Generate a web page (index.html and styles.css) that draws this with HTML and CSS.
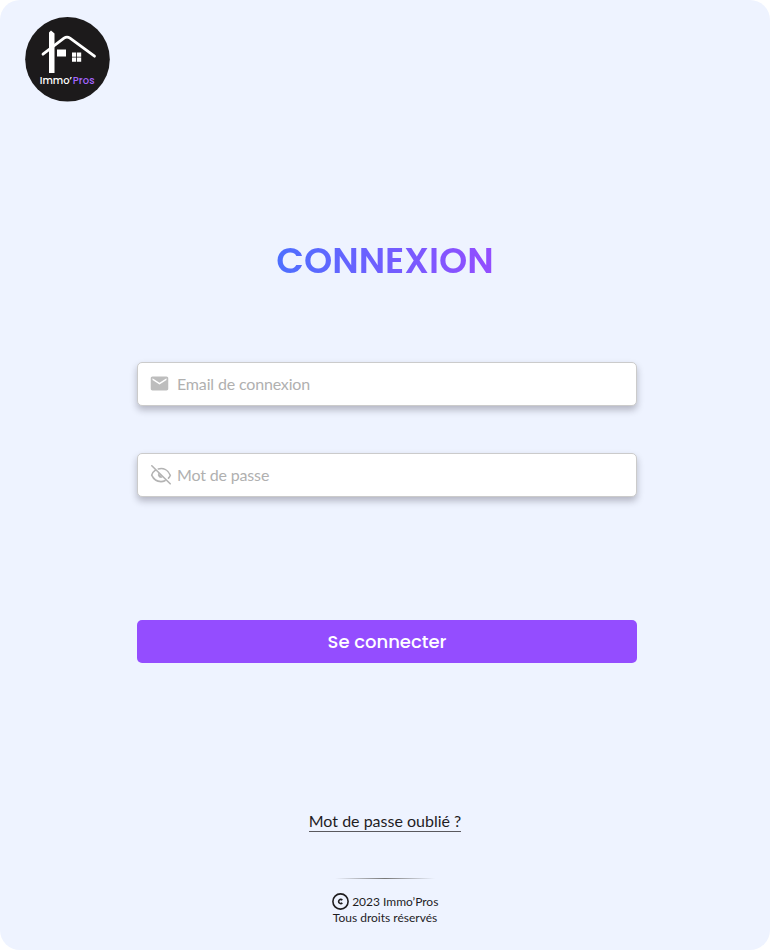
FILE: index.html
```html
<!DOCTYPE html>
<html lang="fr">
<head>
<meta charset="utf-8">
<title>Immo’Pros – Connexion</title>
<link rel="stylesheet" href="styles.css">
</head>
<body>
<div class="page">
  <header class="header">
    <svg class="logo" viewBox="0 0 85 85" role="img" aria-label="Immo’Pros">
      <circle cx="42.5" cy="42.3" r="42.3" fill="#1c1a1b"/>
      <path d="M24 56V15.500L26 13.500L29.500 16.500V56Z" fill="#fff"/>
      <path d="M18 37.200L39 21.200Q42 19.200 45 21.200L69.500 39.200" fill="none" stroke="#fff" stroke-width="2.800" stroke-linecap="round"/>
      <path d="M32 32.500h9v7h-9zM47 35.500h4.200v4.200h-4.200zM52 35.500h4.200v4.200h-4.200zM47 40.500h4.200v4.200h-4.200zM52 40.500h4.200v4.200h-4.200z" fill="#fff"/>
      <text class="logo-text" x="14.800" y="66.600" textLength="32.200" fill="#fff">Immo’</text>
      <text class="logo-text" x="47.800" y="66.600" textLength="21.800" fill="#a566ff">Pros</text>
    </svg>
  </header>
  <main class="login">
    <h1 class="title">CONNEXION</h1>
    <form class="form">
      <label class="field">
        <svg class="icon icon-mail" viewBox="0 0 24 24"><path d="M20 4H4c-1.100 0-2 .9-2 2v12c0 1.100.9 2 2 2h16c1.100 0 2-.9 2-2V6c0-1.100-.9-2-2-2zm0 4-8 5-8-5V6l8 5 8-5z" fill="#bdbdbd"/></svg>
        <input class="input" type="email" placeholder="Email de connexion">
      </label>
      <label class="field">
        <svg class="icon icon-eye" viewBox="0 0 22 22" fill="none" stroke="#b3b3b3" stroke-width="1.600" stroke-linecap="round">
          <path d="M1.800 1.800L20.200 19.800M5.400 6.200C3.400 7.600 2 9.500 1.700 11.200C3.600 15.400 7 17.600 11 17.600C12.400 17.600 13.700 17.300 14.900 16.700M8.300 4.900C13.600 3.400 18.200 6.200 20.300 11.200C19.900 12.300 19.300 13.300 18.500 14.100"/>
          <path d="M8.600 9.500C7.400 12.100 9.700 14.500 12.200 13.200Z" fill="#b3b3b3" stroke-width=".8"/>
        </svg>
        <input class="input" type="password" placeholder="Mot de passe">
      </label>
      <button class="submit" type="button">Se connecter</button>
    </form>
    <a class="forgot">Mot de passe oublié ?</a>
  </main>
  <footer class="footer">
    <div class="divider"></div>
    <div class="copyright">
      <svg class="copy-icon" viewBox="0 0 17 17" fill="none" stroke="#1f1d1f"><circle cx="8.500" cy="8.500" r="7.600" stroke-width="1.600"/><path d="M10.300 7.100A2.100 2.100 0 1 0 10.300 9.900" stroke-width="1.600"/></svg>
      <span>2023 Immo’Pros</span>
    </div>
    <div class="rights">Tous droits réservés</div>
  </footer>
</div>
</body>
</html>
```
FILE: styles.css
```css
* { box-sizing: border-box; }
body { margin: 0; background: #fff; color: #1f1d1f; font-family: Lato, sans-serif; }
.page { width: 770px; height: 950px; background: #eef3ff; border-radius: 20px; display: flex; flex-direction: column; overflow: hidden; }
.header { height: 102px; padding: 16.5px 0 0 25px; }
.logo { display: block; width: 85px; height: 85px; }
.logo-text { font: 500 10px Poppins, Inter, sans-serif; }
.login { display: flex; flex-direction: column; align-items: center; }
.title { margin: 132px 0 0; font: 600 36px/54px Poppins, Inter, sans-serif; color: transparent; background: linear-gradient(90deg, #4d6fff, #944dff); background-clip: text; -webkit-background-clip: text; }
.form { width: 500px; margin: 74px 0 0 4px; display: flex; flex-direction: column; }
.field { height: 44px; margin-bottom: 47px; display: flex; align-items: center; background: #fff; border: 1px solid #cbcbcb; border-radius: 5px; box-shadow: 0 4px 7px rgba(28, 26, 40, .28); }
.icon { flex: none; }
.icon-mail { width: 21px; height: 21px; margin: 0 7.500px 1px 10.500px; }
.icon-eye { width: 22px; height: 22px; margin: 0 5px 0 12px; }
.input { flex: 1; min-width: 0; border: 0; padding: 0; background: transparent; outline: 0; font: 400 16px/24px Lato, sans-serif; letter-spacing: -0.16px; }
.input::placeholder { color: #b0b0b0; opacity: 1; }
.submit { margin-top: 76px; height: 43px; border: 0; border-radius: 5px; background: #944dff; color: #fff; font: 500 18px/27px Poppins, Inter, sans-serif; }
.forgot { margin-top: 148px; height: 21px; line-height: 20px; font-size: 16px; border-bottom: 1px solid #5a595e; }
.footer { margin-top: 46px; display: flex; flex-direction: column; align-items: center; font-size: 12px; }
.divider { width: 100px; height: 1px; background: linear-gradient(90deg, transparent, #777, transparent); }
.copyright { margin-top: 14px; height: 17px; display: flex; align-items: center; gap: 3.5px; }
.copy-icon { width: 17px; height: 17px; }
.rights { line-height: 15px; }
```
